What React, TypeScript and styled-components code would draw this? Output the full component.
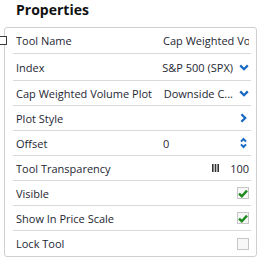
import React from "react";
import styled, { createGlobalStyle } from "styled-components";

const Global = createGlobalStyle`
  * { box-sizing: border-box; }
  body {
    margin: 0;
    background: #ffffff;
    font-family: "Open Sans", "Noto Sans", sans-serif;
    color: #1e2733;
  }
`;

const Page = styled.div`
  position: relative;
  width: 263px;
  height: 262px;
  overflow: hidden;
`;

const Title = styled.h1`
  margin: 0;
  height: 27px;
  padding-left: 16px;
  font-size: 14px;
  line-height: 20px;
  font-weight: 700;
  color: #111111;
`;

const Handle = styled.div`
  position: absolute;
  left: -2px;
  top: 36px;
  width: 9px;
  height: 9px;
  border: 1px solid #3a3a3a;
  background: #ffffff;
`;

const Panel = styled.div`
  margin-left: 4px;
  width: 253px;
  height: 230px;
  border: 1px solid #cfcfcf;
  border-radius: 3px;
  padding: 0 5px 0 8px;
`;

const Row = styled.div<{ $h: number; $last?: boolean }>`
  display: flex;
  align-items: center;
  height: ${(p) => p.$h}px;
  padding: 0 2px 0 3px;
  border-bottom: ${(p) => (p.$last ? "none" : "1px solid #d9d9d9")};
  font-size: 11px;
  white-space: nowrap;
`;

const Label = styled.div<{ $auto?: boolean }>`
  flex: 0 0 auto;
  width: ${(p) => (p.$auto ? "auto" : "144px")};
  margin-right: ${(p) => (p.$auto ? "3px" : "0")};
  overflow: hidden;
`;

const Value = styled.div<{ $align?: "start" | "end" }>`
  flex: 1 1 auto;
  min-width: 0;
  display: flex;
  align-items: center;
  justify-content: ${(p) => (p.$align === "start" ? "flex-start" : "flex-end")};
  gap: 5px;
`;

const Field = styled.div`
  flex: 1 1 auto;
  min-width: 0;
  overflow: hidden;
  padding-left: 3px;
`;

const Clip = styled.span`
  min-width: 0;
  overflow: hidden;
  text-overflow: ellipsis;
`;

const IconBox = styled.span`
  flex: 0 0 auto;
  display: flex;
  align-items: center;
  justify-content: center;
  width: 11px;
`;

const Box = styled.span`
  display: flex;
  align-items: center;
  justify-content: center;
  width: 12px;
  height: 12px;
  border: 1px solid #c6c6c6;
  background: #f7f7f7;
`;

const BLUE = "#1769c2";

const ChevronDown = () => (
  <svg width="10" height="7" viewBox="0 0 10 7">
    <path d="M1.2 1.4 L5 5.2 L8.8 1.4" fill="none" stroke={BLUE} strokeWidth="2.3" strokeLinecap="butt" />
  </svg>
);

const ChevronRight = () => (
  <svg width="7" height="10" viewBox="0 0 7 10">
    <path d="M1.4 1.2 L5.2 5 L1.4 8.8" fill="none" stroke={BLUE} strokeWidth="2.3" />
  </svg>
);

const Spinner = () => (
  <svg width="7" height="12" viewBox="0 0 7 12">
    <path d="M1 4.6 L3.5 2 L6 4.6" fill="none" stroke={BLUE} strokeWidth="2" />
    <path d="M1 7.4 L3.5 10 L6 7.4" fill="none" stroke={BLUE} strokeWidth="2" />
  </svg>
);

const Grip = () => (
  <svg width="7" height="8" viewBox="0 0 7 8">
    <rect x="0" y="0" width="1.6" height="8" fill="#333" />
    <rect x="2.7" y="0" width="1.6" height="8" fill="#333" />
    <rect x="5.4" y="0" width="1.6" height="8" fill="#333" />
  </svg>
);

const Check = ({ on }: { on: boolean }) => (
  <Box>
    {on && (
      <svg width="10" height="9" viewBox="0 0 10 9">
        <path d="M1 4.6 L3.8 7.2 L9 1.6" fill="none" stroke="#1f8a1f" strokeWidth="2.4" />
      </svg>
    )}
  </Box>
);

export default function App() {
  return (
    <Page>
      <Global />
      <Title>Properties</Title>
      <Handle />
      <Panel>
        <Row $h={26}>
          <Label>Tool Name</Label>
          <Field>Cap Weighted Volume</Field>
        </Row>
        <Row $h={27}>
          <Label>Index</Label>
          <Value>
            <span>S&amp;P 500 (SPX)</span>
            <IconBox>
              <ChevronDown />
            </IconBox>
          </Value>
        </Row>
        <Row $h={25}>
          <Label $auto>Cap Weighted Volume Plot</Label>
          <Value>
            <Clip>Downside C...</Clip>
            <IconBox>
              <ChevronDown />
            </IconBox>
          </Value>
        </Row>
        <Row $h={25}>
          <Label>Plot Style</Label>
          <Value>
            <IconBox>
              <ChevronRight />
            </IconBox>
          </Value>
        </Row>
        <Row $h={25}>
          <Label>Offset</Label>
          <Field>0</Field>
          <IconBox>
            <Spinner />
          </IconBox>
        </Row>
        <Row $h={25}>
          <Label>Tool Transparency</Label>
          <Value>
            <Grip />
            <span style={{ marginLeft: 6 }}>100</span>
          </Value>
        </Row>
        <Row $h={25}>
          <Label>Visible</Label>
          <Value>
            <Check on />
          </Value>
        </Row>
        <Row $h={25}>
          <Label>Show In Price Scale</Label>
          <Value>
            <Check on />
          </Value>
        </Row>
        <Row $h={25} $last>
          <Label>Lock Tool</Label>
          <Value>
            <Check on={false} />
          </Value>
        </Row>
      </Panel>
    </Page>
  );
}
